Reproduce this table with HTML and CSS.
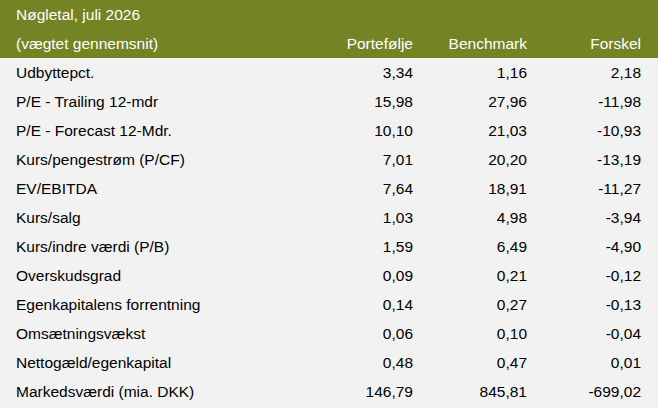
FILE: index.html
```html
<!DOCTYPE html>
<html lang="da">
<head>
<meta charset="utf-8">
<link rel="stylesheet" href="styles.css">
</head>
<body>
<table class="kt">
  <colgroup>
    <col class="w-lbl">
    <col class="w-c1">
    <col class="w-c2">
    <col class="w-c3">
  </colgroup>
  <thead>
    <tr class="title"><th colspan="4" class="lbl">Nøgletal, juli 2026</th></tr>
    <tr class="cols">
      <th class="lbl">(vægtet gennemsnit)</th>
      <th class="num">Portefølje</th>
      <th class="num">Benchmark</th>
      <th class="num last">Forskel</th>
    </tr>
  </thead>
  <tbody>
    <tr><td class="lbl">Udbyttepct.</td><td class="num">3,34</td><td class="num">1,16</td><td class="num last">2,18</td></tr>
    <tr><td class="lbl">P/E - Trailing 12-mdr</td><td class="num">15,98</td><td class="num">27,96</td><td class="num last">-11,98</td></tr>
    <tr><td class="lbl">P/E - Forecast 12-Mdr.</td><td class="num">10,10</td><td class="num">21,03</td><td class="num last">-10,93</td></tr>
    <tr><td class="lbl">Kurs/pengestrøm (P/CF)</td><td class="num">7,01</td><td class="num">20,20</td><td class="num last">-13,19</td></tr>
    <tr><td class="lbl">EV/EBITDA</td><td class="num">7,64</td><td class="num">18,91</td><td class="num last">-11,27</td></tr>
    <tr><td class="lbl">Kurs/salg</td><td class="num">1,03</td><td class="num">4,98</td><td class="num last">-3,94</td></tr>
    <tr><td class="lbl">Kurs/indre værdi (P/B)</td><td class="num">1,59</td><td class="num">6,49</td><td class="num last">-4,90</td></tr>
    <tr><td class="lbl">Overskudsgrad</td><td class="num">0,09</td><td class="num">0,21</td><td class="num last">-0,12</td></tr>
    <tr><td class="lbl">Egenkapitalens forrentning</td><td class="num">0,14</td><td class="num">0,27</td><td class="num last">-0,13</td></tr>
    <tr><td class="lbl">Omsætningsvækst</td><td class="num">0,06</td><td class="num">0,10</td><td class="num last">-0,04</td></tr>
    <tr><td class="lbl">Nettogæld/egenkapital</td><td class="num">0,48</td><td class="num">0,47</td><td class="num last">0,01</td></tr>
    <tr><td class="lbl">Markedsværdi (mia. DKK)</td><td class="num">146,79</td><td class="num">845,81</td><td class="num last">-699,02</td></tr>
  </tbody>
</table>
</body>
</html>
```

FILE: styles.css
```css
html, body {
  margin: 0;
  padding: 0;
  background: #f2f2f2;
}
body {
  font-family: "Liberation Sans", Arial, sans-serif;
  font-size: 15.5px;
  color: #000;
}
.kt {
  width: 658px;
  border-collapse: collapse;
  table-layout: fixed;
}
.w-lbl { width: 316px; }
.w-c1 { width: 97px; }
.w-c2 { width: 114px; }
.w-c3 { width: 131px; }
.kt th, .kt td {
  height: 29px;
  padding: 0;
  font-weight: normal;
  white-space: nowrap;
  vertical-align: middle;
}
.kt thead tr {
  background: #748324;
  color: #fff;
}
.kt .lbl {
  text-align: left;
  padding-left: 16px;
}
.kt .num {
  text-align: right;
}
.kt .last {
  padding-right: 17px;
}
```
